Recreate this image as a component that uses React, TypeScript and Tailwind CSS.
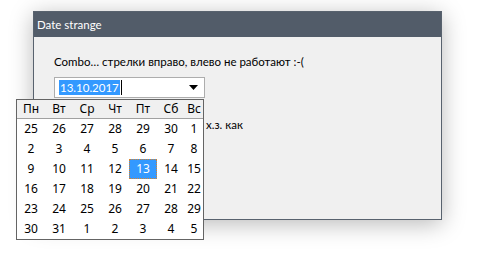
import React from "react";

const DAYS = ["Пн", "Вт", "Ср", "Чт", "Пт", "Сб", "Вс"];

const WEEKS = [
  [25, 26, 27, 28, 29, 30, 1],
  [2, 3, 4, 5, 6, 7, 8],
  [9, 10, 11, 12, 13, 14, 15],
  [16, 17, 18, 19, 20, 21, 22],
  [23, 24, 25, 26, 27, 28, 29],
  [30, 31, 1, 2, 3, 4, 5],
];

function CalendarPopup() {
  return (
    <div className="absolute left-[16px] top-[99px] w-[188px] border border-[#646464] bg-white overflow-hidden text-[12px] text-black font-['Noto_Sans',sans-serif]">
      <div className="grid grid-cols-[repeat(6,28px)_1fr] h-[19px] items-center bg-[#f0f0f0] border-b border-[#a0a0a0]">
        {DAYS.map((d) => (
          <div key={d} className="text-center leading-none">{d}</div>
        ))}
      </div>
      {WEEKS.map((week, wi) => (
        <div key={wi} className="grid grid-cols-[repeat(6,28px)_1fr] h-[20px] items-stretch">
          {week.map((n, di) => {
            const selected = wi === 2 && di === 4;
            return (
              <div
                key={di}
                className={
                  selected
                    ? "flex items-center justify-center bg-[#3399ff] text-white border border-dotted border-[#d9822b]"
                    : "flex items-center justify-center"
                }
              >
                {n}
              </div>
            );
          })}
        </div>
      ))}
    </div>
  );
}

export default function App() {
  return (
    <div className="relative w-[491px] h-[267px] bg-white overflow-hidden font-['Lato','Noto_Sans',sans-serif]">
      <div className="absolute left-[33px] top-[11px] w-[409px] h-[209px] flex flex-col border border-[#58626e] bg-[#f0f0f0] shadow-[0_4px_22px_rgba(0,0,0,0.28)]">
        <div className="h-[25px] shrink-0 bg-[#525c69] flex items-center pl-[3px] text-[11.5px] text-white">
          Date strange
        </div>
        <div className="pl-[20px] pt-[16px] text-[11.5px] text-black">
          <div className="h-[18px] leading-[18px]">Combo… стрелки вправо, влево не работают :-(</div>
          <div className="mt-[6px] w-[151px] h-[21px] border border-[#adadad] bg-white flex items-center pl-[4px] pr-[6px]">
            <span className="bg-[#3399ff] text-white leading-[15px] px-[1px]">13.10.2017</span>
            <span className="ml-[1px] w-px h-[15px] bg-black" />
            <svg className="ml-auto" width="9" height="5" viewBox="0 0 9 5">
              <path d="M0 0H9L4.5 5Z" fill="#000" />
            </svg>
          </div>
          <div className="mt-[18px] ml-[152px] leading-[18px]">х.з. как</div>
        </div>
      </div>
      <CalendarPopup />
    </div>
  );
}
